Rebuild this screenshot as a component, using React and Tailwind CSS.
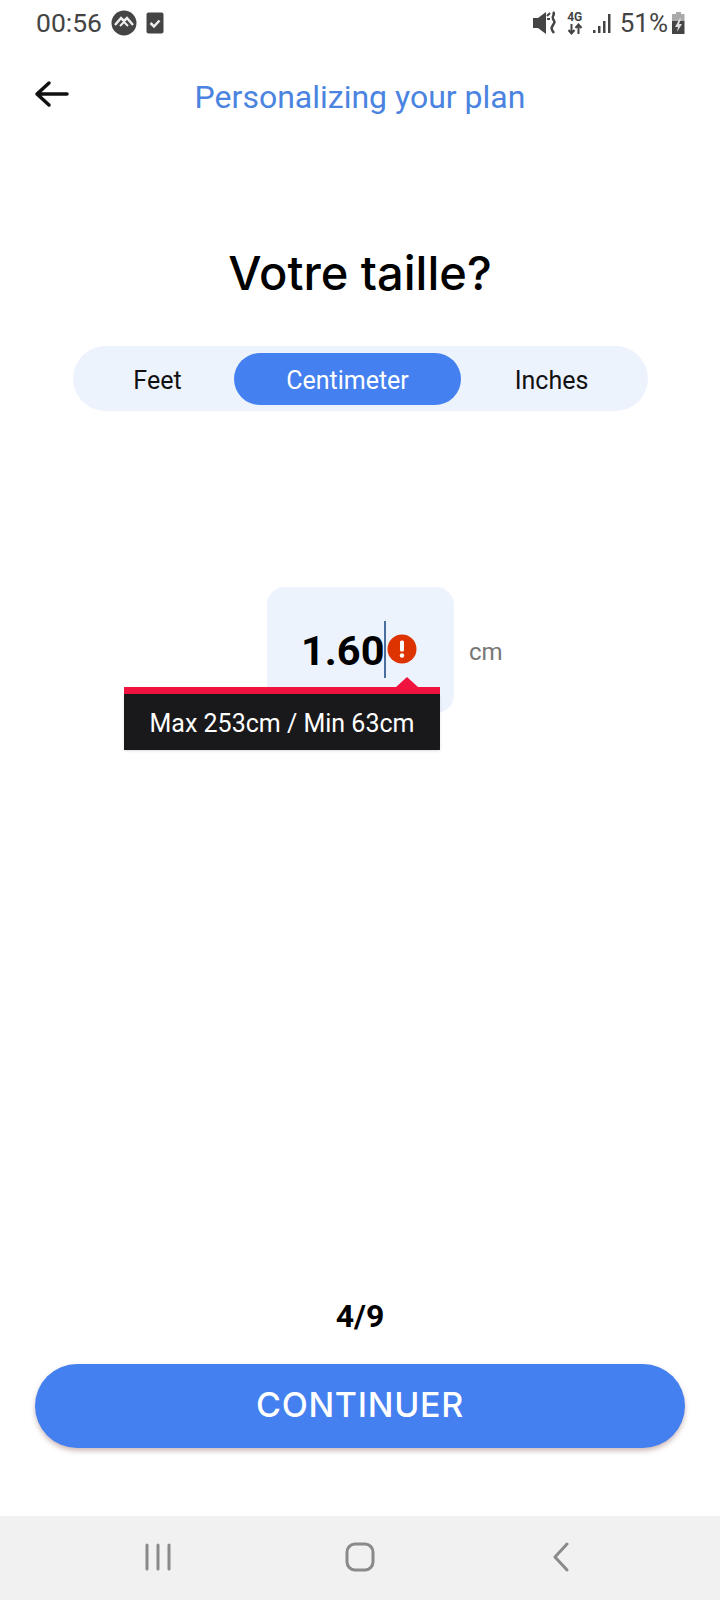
const StatusIcons = () => (
  <div className="flex items-center">
    <svg width="26" height="24" viewBox="0 0 26 24" className="mr-[9px]">
      <path d="M1 7h5l8-6v22l-8-6H1z" fill="#444" />
      <path d="M15 5l3-3M15 8h3" stroke="#444" strokeWidth="2" fill="none" />
      <path d="M21 1c3 3-2 4 0 7s2 3 0 6-2 4 1 8" stroke="#444" strokeWidth="2.500" fill="none" />
    </svg>
    <div className="flex flex-col items-center mr-[9px] text-[#444] font-bold leading-none">
      <span className="text-[12px] leading-[12px]">4G</span>
      <svg width="16" height="12" viewBox="0 0 16 12">
        <path d="M4.500 1v9M1.500 7l3 3.500 3-3.500M11.500 11V2M8.500 5l3-3.500 3 3.500" stroke="#444" strokeWidth="2" fill="none" />
      </svg>
    </div>
    <svg width="20" height="24" viewBox="0 0 20 24" className="mr-[8px]">
      <path d="M1 19h2.500v3H1zM6 15h2.500v7H6zM11 10h2.500v12H11zM16 3h2.500v19H16z" fill="#444" />
    </svg>
    <span className="text-[26px] leading-none text-[#444] mr-[3px]">51%</span>
    <svg width="15" height="24" viewBox="0 0 15 24">
      <path d="M5 1h5v2h3.500v7H1V3h4z" fill="#aaa" />
      <path d="M1 10h12.500v13H1z" fill="#444" />
      <path d="M9 7L4 16h3l-1 5 5-8H8l2-5z" fill="#ddd" />
    </svg>
  </div>
);

const App = () => {
  return (
    <div className="w-[720px] h-[1600px] bg-white flex flex-col overflow-hidden font-['Roboto',sans-serif]">
      {/* Status bar */}
      <div className="h-[46px] flex items-center justify-between pl-[36px] pr-[34px] shrink-0">
        <div className="flex items-center">
          <span className="text-[26.500px] leading-none text-[#444] mr-[9px]">00:56</span>
          <svg width="26" height="26" viewBox="0 0 26 26" className="mr-[9px]">
            <circle cx="13" cy="13" r="12.500" fill="#444" />
            <path d="M4 15l6-7 3 3 3-3 6 7" stroke="#eee" strokeWidth="2.500" fill="none" />
            <path d="M9 16l4-4 4 4" stroke="#eee" strokeWidth="2" fill="none" />
          </svg>
          <svg width="18" height="22" viewBox="0 0 18 22">
            <rect x="0.500" y="0.500" width="17" height="21" rx="2" fill="#444" />
            <path d="M4.500 11l3.500 3.500 5.500-6" stroke="#eee" strokeWidth="2.500" fill="none" />
          </svg>
        </div>
        <StatusIcons />
      </div>

      {/* Header */}
      <div className="relative h-[96px] flex items-center justify-center shrink-0">
        <svg width="36" height="30" viewBox="0 0 36 30" className="absolute left-[34px] top-[33px]">
          <path d="M33 15H3M15 4L3 15l12 11" stroke="#111" strokeWidth="3.500" strokeLinecap="round" strokeLinejoin="round" fill="none" />
        </svg>
        <h2 className="mt-[5px] text-[32px] leading-none text-[#4a84e0]">Personalizing your plan</h2>
      </div>

      {/* Title */}
      <h1 className="mt-[95px] text-center text-[47px] leading-[72px] font-medium text-black font-['Inter',sans-serif] shrink-0">
        Votre taille?
      </h1>

      {/* Unit picker */}
      <div className="mt-[37px] ml-[73px] mr-[72px] h-[65px] rounded-full bg-[#edf3fd] flex items-center text-[25px] shrink-0">
        <div className="w-[161px] pl-[8px] pt-[4px] text-center text-[#111]">Feet</div>
        <div className="w-[227px] h-[52px] pt-[4px] rounded-full bg-[#4480f0] text-white flex items-center justify-center">
          Centimeter
        </div>
        <div className="flex-1 pr-[6px] pt-[4px] text-center text-[#111]">Inches</div>
      </div>

      {/* Height field */}
      <div className="relative mt-[176px] ml-[267px] flex items-start shrink-0">
        <div className="w-[187px] h-[126px] rounded-[18px] bg-[#edf3fd] flex items-start pl-[34px] pt-[33px]">
          <span className="text-[41.500px] leading-[62px] font-bold text-black">1.60</span>
          <div className="w-[1.500px] h-[57px] mt-[1px] bg-[#4a6f9e]" />
          <svg width="30" height="30" viewBox="0 0 30 30" className="ml-[1px] mt-[14px]">
            <circle cx="15" cy="15" r="14.500" fill="#dd3300" />
            <rect x="13" y="6.500" width="4" height="11" rx="1.500" fill="#fff" />
            <circle cx="15" cy="21.500" r="2.200" fill="#fff" />
          </svg>
        </div>
        <span className="ml-[15px] mt-[48px] text-[24px] leading-[34px] text-[#777]">cm</span>

        {/* Validation tooltip */}
        <div className="absolute left-[-143px] top-[100px] w-[316px]">
          <div className="absolute right-[22px] top-[-10px] w-0 h-0 border-x-[11px] border-x-transparent border-b-[10px] border-b-[#f0133f]" />
          <div className="h-[7px] bg-[#f0133f]" />
          <div className="h-[56px] pt-[3px] bg-[#19191b] text-white text-[25px] flex items-center justify-center shadow-sm">
            Max 253cm / Min 63cm
          </div>
        </div>
      </div>

      <div className="flex-1" />

      {/* Footer */}
      <div className="text-center text-[32px] leading-[40px] font-bold text-black shrink-0">4/9</div>
      <button className="mt-[28px] mx-[35px] h-[84px] pb-[3px] rounded-full bg-[#4480f0] text-white text-[34px] font-medium font-['Inter',sans-serif] tracking-[0.7px] shadow-[0_3px_5px_rgba(120,60,60,0.35)] shrink-0">
        CONTINUER
      </button>

      {/* Nav bar */}
      <div className="mt-[68px] h-[84px] bg-[#f1f1f1] flex items-center justify-between px-[143px] shrink-0">
        <svg width="30" height="30" viewBox="0 0 30 30" className="-mt-[3px]">
          <path d="M4 3v24M15 3v24M26 3v24" stroke="#8a8a8a" strokeWidth="3" strokeLinecap="round" />
        </svg>
        <svg width="30" height="30" viewBox="0 0 30 30" className="-mt-[3px]">
          <rect x="2" y="2" width="26" height="26" rx="8" stroke="#8a8a8a" strokeWidth="3" fill="none" />
        </svg>
        <svg width="30" height="30" viewBox="0 0 30 30" className="-mt-[3px]">
          <path d="M20 2L8 15l12 13" stroke="#8a8a8a" strokeWidth="3" strokeLinecap="round" strokeLinejoin="round" fill="none" />
        </svg>
      </div>
    </div>
  );
};

export default App;
